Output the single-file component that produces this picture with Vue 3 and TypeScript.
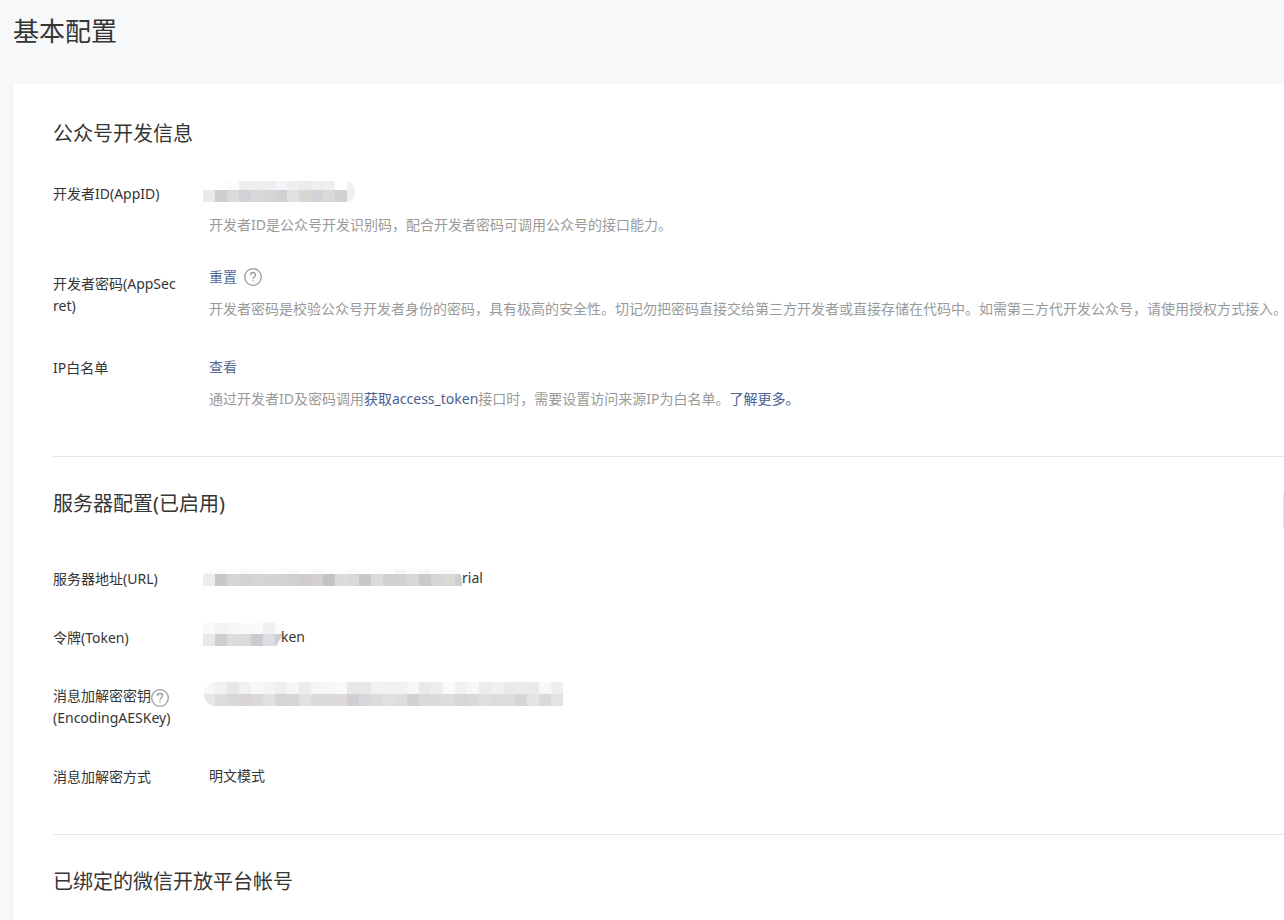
<script setup lang="ts">
interface Tile {
  x: number
  y: number
  w: number
  h: number
  fill: string
}

interface Mosaic {
  id: string
  width: number
  outline: string
  tiles: Tile[]
}

function strip(colors: string, y: number, h: number, start = 0): Tile[] {
  return colors.split(' ').map((c, i) => ({ x: start + i * 12, y, w: 12, h, fill: '#' + c }))
}

const appId: Mosaic = {
  id: 'mask-appid',
  width: 152,
  outline: 'M0 12H24V3H144Q152 5 152 14Q152 21 147 24H0Z',
  tiles: [
    ...strip('fcfbfa eceef0 eeefed eeeeee f3f4f7 eeeff0 ebecea edefef eeefef ffffff', 3, 9, 24),
    ...strip('e9e9e7 cececf dbdad8 d1d1d7 d8d8d7 d5d5d8 d1d1d3 e1e1e2 d8d7d5 d2d3d8 d8d9d8 d0d0d3', 12, 12),
    { x: 144, y: 3, w: 8, h: 21, fill: '#eff1f1' },
  ],
}

const url: Mosaic = {
  id: 'mask-url',
  width: 259,
  outline: 'M0 23V13Q4 6 14 6H253Q253 11 257 11Q259 12 259 23Z',
  tiles: [
    ...strip('fafafa fafafa fefefe f9f9f9 fafafa fefefe fefefe f9f9f9 fefefe f9f9f9 fefefe fefefe fafafa fefefe fefefe fefefe f7f6f6 fbfbfb f8f8f8 fbfbfb f9f9f9 fefefe', 6, 5),
    ...strip('ececec c7c8ca d5d5d7 d2d3d1 d5d6d4 d3d5d2 d3d4d2 d0d0cf d1cbcc d1d1d4 c3c3c3 dadcda d8dad8 c9c8c7 dadcda d3cfcf d0d2d0 d7d9d7 cacac9 d7d5d7 d8d8d6 cdcdd2', 11, 12),
  ],
}

const token: Mosaic = {
  id: 'mask-token',
  width: 80,
  outline: 'M0 24V1H60Q70 -1 76 3Q81 8 80 13L73 24Z',
  tiles: [
    ...strip('f9f9f9 f3f3f4 f6f6f6 fafafa fafafa f0f0f0 f9f9f9', 0, 12),
    ...strip('e9e8e6 cececf dbdddc dedadb cacbd0 dedee0 cfd0d3', 12, 12),
  ],
}

const aesKey: Mosaic = {
  id: 'mask-key',
  width: 360,
  outline: 'M12 2H358Q360 2 360 4V26H12Q1 24 1 14Q1 4 12 2Z',
  tiles: [
    ...strip('f7f7f5 f1f1f1 e8e7e5 f1f1f1 f7f9f9 f3f4f2 efefef f5f7f7 ecece9 f5f5f5 f6f6f6 f9f9fa e7e7e7 e7e7e7 f2f2f3 f1f1f1 f1f1f1 f7f7f5 e8e8e8 eeeeee fafafa f1f1ef f7f7f7 ececee f0f0f0 e9eaed eaebec e9ebea f6f7f7 eeeeee', 2, 12),
    ...strip('e6e6e4 dcdde0 dbd9d8 dad5d2 d9dadd e1e1e1 d4d5d4 d5d7d6 e1e1e1 dadadc dcdbd9 dfdada d0cfd6 d8d8d9 dcdbda e0e0e1 dedee1 d1d1cf d9dbda dadcdb dcdcdc d8d7d6 d9d9db e0dfde dcdcdd dddde0 d5d7d6 e4e4e4 d9dadd e3e3e3', 14, 12),
  ],
}

const serverRows = [
  { label: '服务器地址(URL)', mosaic: url, tail: 'rial', help: false, second: '' },
  { label: '令牌(Token)', mosaic: token, tail: 'ken', help: false, second: '' },
  { label: '消息加解密密钥', mosaic: aesKey, tail: '', help: true, second: '(EncodingAESKey)' },
]
</script>

<template>
  <div class="page">
    <header class="page-head">
      <h1>基本配置</h1>
    </header>

    <main class="card">
      <section class="block">
        <h2>公众号开发信息</h2>
        <dl class="rows dev-rows">
          <div class="row">
            <dt>开发者ID(AppID)</dt>
            <dd>
              <div class="value">
                <svg class="mosaic" :width="appId.width" height="30" aria-hidden="true">
                  <clipPath :id="appId.id"><path :d="appId.outline" /></clipPath>
                  <g :clip-path="`url(#${appId.id})`" shape-rendering="crispEdges">
                    <rect v-for="(t, i) in appId.tiles" :key="i" :x="t.x" :y="t.y" :width="t.w" :height="t.h" :fill="t.fill" />
                  </g>
                </svg>
              </div>
              <p class="desc">开发者ID是公众号开发识别码，配合开发者密码可调用公众号的接口能力。</p>
            </dd>
          </div>
          <div class="row secret">
            <dt>开发者密码(AppSecret)</dt>
            <dd>
              <div class="value">
                <a href="#">重置</a>
                <svg class="help" width="18" height="18" viewBox="0 0 18 18" aria-hidden="true">
                  <circle cx="9" cy="9" r="8.3" />
                  <path d="M6.4 7.2C6.4 5.4 7.5 4.5 9 4.5S11.6 5.5 11.6 6.9C11.6 8.8 9 8.9 9 11" />
                  <path d="M9 12.2V13.6" />
                </svg>
              </div>
              <p class="desc">开发者密码是校验公众号开发者身份的密码，具有极高的安全性。切记勿把密码直接交给第三方开发者或直接存储在代码中。如需第三方代开发公众号，请使用授权方式接入。</p>
            </dd>
          </div>
          <div class="row whitelist">
            <dt>IP白名单</dt>
            <dd>
              <div class="value"><a href="#">查看</a></div>
              <p class="desc">通过开发者ID及密码调用<a href="#">获取access_token</a>接口时，需要设置访问来源IP为白名单。<a href="#">了解更多。</a></p>
            </dd>
          </div>
        </dl>
      </section>

      <section class="block">
        <div class="block-head">
          <h2>服务器配置(已启用)</h2>
          <span class="action-edge"></span>
        </div>
        <dl class="rows server-rows">
          <div v-for="r in serverRows" :key="r.label" class="row" :class="{ 'key-row': r.help }">
            <dt>
              {{ r.label }}<svg v-if="r.help" class="help inline" width="18" height="18" viewBox="0 0 18 18" aria-hidden="true">
                <circle cx="9" cy="9" r="8.3" />
                <path d="M6.4 7.2C6.4 5.4 7.5 4.5 9 4.5S11.6 5.5 11.6 6.9C11.6 8.8 9 8.9 9 11" />
                <path d="M9 12.2V13.6" />
              </svg>
              <template v-if="r.second"><br />{{ r.second }}</template>
            </dt>
            <dd>
              <div class="value">
                <svg class="mosaic" :width="r.mosaic.width" height="30" aria-hidden="true">
                  <clipPath :id="r.mosaic.id"><path :d="r.mosaic.outline" /></clipPath>
                  <g :clip-path="`url(#${r.mosaic.id})`" shape-rendering="crispEdges">
                    <rect v-for="(t, i) in r.mosaic.tiles" :key="i" :x="t.x" :y="t.y" :width="t.w" :height="t.h" :fill="t.fill" />
                  </g>
                </svg>
                <span v-if="r.tail" :class="{ tuck: r.tail === 'ken' }">{{ r.tail }}</span>
              </div>
            </dd>
          </div>
          <div class="row">
            <dt>消息加解密方式</dt>
            <dd><div class="value">明文模式</div></dd>
          </div>
        </dl>
      </section>

      <section class="block">
        <h2>已绑定的微信开放平台帐号</h2>
      </section>
    </main>
  </div>
</template>

<style>
html,
body {
  margin: 0;
  background: #f6f8f9;
}
body {
  overflow: hidden;
}
</style>

<style scoped>
.page {
  min-height: 100vh;
  overflow: hidden;
  background: #f6f8f9;
  color: #353535;
  font-family: "Noto Sans", "Noto Sans CJK SC", sans-serif;
  font-size: 14px;
  line-height: 22px;
}
.page-head {
  padding: 13px 13px 35px;
}
h1,
h2,
dl,
dd,
p {
  margin: 0;
  font-weight: 400;
}
h1 {
  font-size: 26px;
  line-height: 36px;
}
h2 {
  font-size: 20px;
  line-height: 28px;
}
.card {
  margin-left: 13px;
  padding: 3px 0 0 40px;
  background: #fff;
  border-radius: 3px 0 0 0;
  box-shadow: 0 1px 3px rgba(0, 0, 0, 0.06);
}
.block {
  padding: 33px 0 46px;
  border-bottom: 1px solid #e7e7eb;
}
.block:last-child {
  border-bottom: 0;
}
.block-head {
  display: flex;
  justify-content: space-between;
  height: 38px;
}
.action-edge {
  align-self: flex-end;
  width: 1px;
  height: 34px;
  background: #e4e4e4;
}
.rows {
  display: flex;
  flex-direction: column;
}
.dev-rows {
  margin-top: 34px;
}
.server-rows {
  margin-top: 39px;
  gap: 36px;
}
.row {
  display: flex;
}
dt {
  flex: none;
  width: 128px;
  margin-right: 28px;
  padding-top: 1px;
  word-break: break-all;
}
dd {
  flex: 1;
  min-width: 0;
}
.secret {
  margin-top: 30px;
}
.secret dt {
  padding-top: 7px;
}
.whitelist {
  margin-top: 36px;
}
.key-row {
  margin-top: -1px;
}
.value {
  display: flex;
  align-items: center;
  height: 22px;
}
.desc {
  margin-top: 10px;
  color: #9a9a9a;
  white-space: nowrap;
}
a {
  color: #576b95;
  text-decoration: none;
}
.desc a {
  color: #4c6093;
}
.mosaic {
  flex: none;
  margin-left: -6px;
}
.tuck {
  margin-left: -2px;
}
.help {
  flex: none;
  margin-left: 7px;
  fill: none;
  stroke: #9a9a9a;
  stroke-width: 1.3;
}
.help.inline {
  margin: -4px 0;
  vertical-align: -2px;
}
</style>
